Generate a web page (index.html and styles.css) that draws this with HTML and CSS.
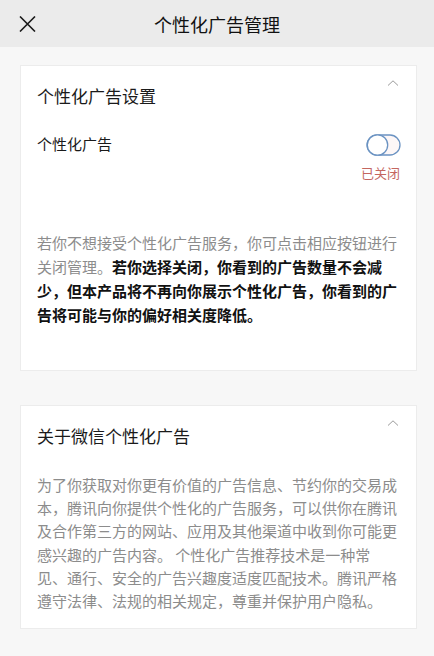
FILE: index.html
```html
<!DOCTYPE html>
<html lang="zh-CN">
<head>
  <meta charset="UTF-8" />
  <meta name="viewport" content="width=device-width, initial-scale=1" />
  <title>个性化广告管理</title>
  <link rel="stylesheet" href="styles.css">
</head>
<body>
  <header class="topbar">
    <div class="close">
      <svg width="17" height="16" viewBox="0 0 17 16">
        <path d="M1 0.5 L16 15.5 M16 0.5 L1 15.5" stroke="#1a1a1a" stroke-width="1.6" fill="none" />
      </svg>
    </div>
    <div class="title">个性化广告管理</div>
    <div></div>
  </header>

  <main>
    <section class="card">
      <div class="card-head">
        <h3>个性化广告设置</h3>
        <svg class="chevron" width="12" height="6" viewBox="0 0 12 6">
          <path d="M1 5.5 L6 0.8 L11 5.5" stroke="#9a9a9a" stroke-width="1" fill="none" />
        </svg>
      </div>

      <div class="setting">
        <span class="label">个性化广告</span>
        <div class="switch-col">
          <svg class="switch" width="36" height="22" viewBox="0 0 36 22">
            <rect x="1" y="1" width="33" height="20" rx="10" fill="#fdf7f7" stroke="#6b93c2" stroke-width="1.3" />
            <circle cx="11.5" cy="11" r="10.2" fill="#fff" stroke="#6b93c2" stroke-width="1.3" />
          </svg>
          <span class="state">已关闭</span>
        </div>
      </div>

      <p class="desc desc-first">若你不想接受个性化广告服务，你可点击相应按钮进行关闭管理。<b>若你选择关闭，你看到的广告数量不会减少，但本产品将不再向你展示个性化广告，你看到的广告将可能与你的偏好相关度降低。</b></p>
    </section>

    <section class="card">
      <div class="card-head">
        <h3>关于微信个性化广告</h3>
        <svg class="chevron" width="12" height="6" viewBox="0 0 12 6">
          <path d="M1 5.5 L6 0.8 L11 5.5" stroke="#9a9a9a" stroke-width="1" fill="none" />
        </svg>
      </div>

      <p class="desc desc-about">为了你获取对你更有价值的广告信息、节约你的交易成本，腾讯向你提供个性化的广告服务，可以供你在腾讯及合作第三方的网站、应用及其他渠道中收到你可能更感兴趣的广告内容。 个性化广告推荐技术是一种常见、通行、安全的广告兴趣度适度匹配技术。腾讯严格遵守法律、法规的相关规定，尊重并保护用户隐私。</p>
    </section>
  </main>
</body>
</html>
```

FILE: styles.css
```css
body {
  margin: 0;
  background: #f7f7f7;
  font-family: "Noto Sans CJK SC", "Noto Sans", sans-serif;
  color: #1a1a1a;
}

.topbar {
  height: 47px;
  background: #ebebeb;
  display: grid;
  grid-template-columns: 1fr auto 1fr;
  align-items: center;
}

.close {
  padding-left: 19px;
  display: flex;
  align-items: center;
}

.title {
  font-size: 18px;
  line-height: 24px;
  color: #111;
}

main {
  padding: 18px 17px 0 20px;
}

.card {
  background: #fff;
  border: 1px solid #ececec;
  padding: 14px 17px 43px 16px;
  margin-bottom: 34px;
}

.card-head {
  display: flex;
  justify-content: space-between;
  align-items: flex-start;
}

.card-head h3 {
  margin: 4px 0 0;
  font-size: 17px;
  line-height: 24px;
  font-weight: normal;
  color: #1a1a1a;
}

.chevron {
  display: block;
}

.setting {
  display: flex;
  justify-content: space-between;
  align-items: flex-start;
  margin-top: 25px;
}

.label {
  font-size: 15px;
  line-height: 22px;
}

.switch-col {
  display: flex;
  flex-direction: column;
  align-items: flex-end;
  margin-right: -3px;
}

.switch {
  display: block;
  margin-top: 1px;
}

.state {
  margin-top: 8px;
  font-size: 13px;
  line-height: 18px;
  color: #c4665f;
  margin-right: 2px;
}

.desc {
  margin: 0;
  font-size: 15px;
  line-height: 24px;
  color: #8c8c8c;
}

.desc b {
  color: #111;
}

.desc-first {
  margin-top: 49px;
}

.desc-about {
  margin-top: 25px;
  line-height: 23.2px;
}

.card + .card {
  padding-bottom: 16px;
}
```
